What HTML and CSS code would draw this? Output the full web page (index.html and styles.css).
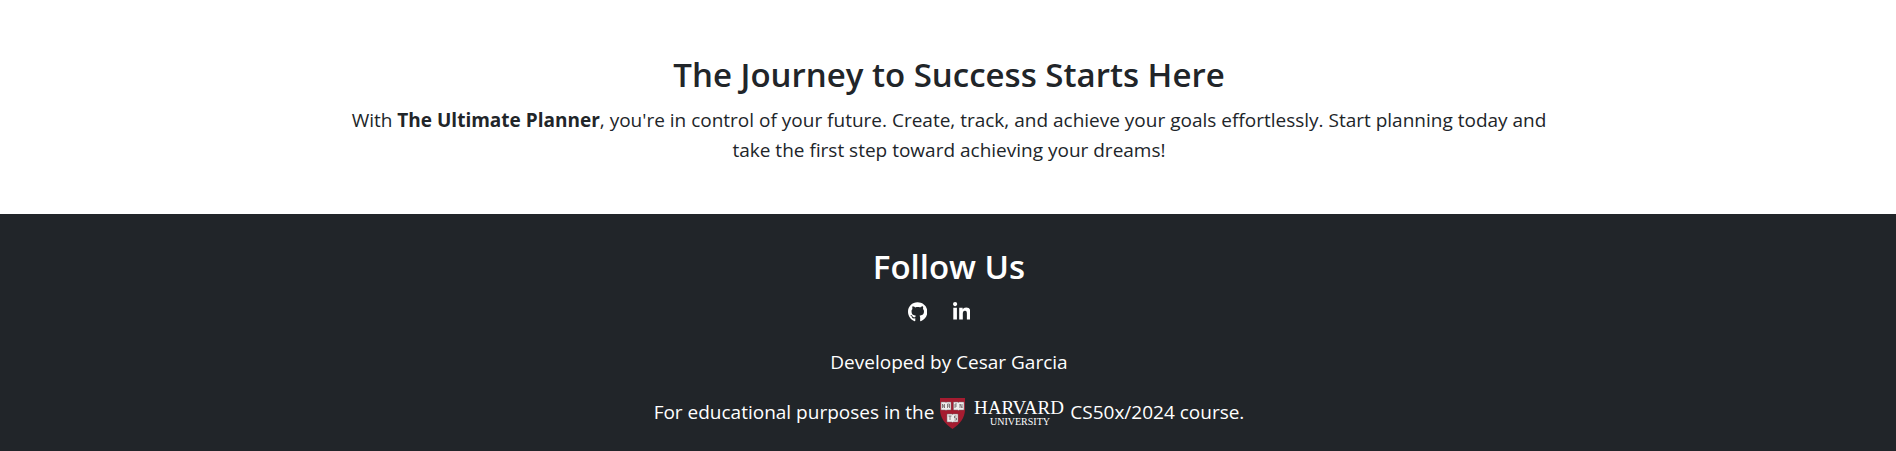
FILE: index.html
```html
<!DOCTYPE html>
<html lang="en">
<head>
<meta charset="utf-8">
<title>The Ultimate Planner</title>
<link rel="stylesheet" href="styles.css">
</head>
<body>
<main class="intro">
  <h2 class="title">The Journey to Success Starts Here</h2>
  <p class="lead">With <strong>The Ultimate Planner</strong>, you're in control of your future. Create, track, and achieve your goals effortlessly. Start planning today and take the first step toward achieving your dreams!</p>
</main>
<footer class="footer">
  <h2 class="title">Follow Us</h2>
  <nav class="social">
    <a href="#github" aria-label="GitHub"><svg class="icon" viewBox="0 0 496 512" fill="currentColor"><path d="M165.900 397.400c0 2-2.300 3.600-5.200 3.600-3.300.3-5.600-1.300-5.600-3.600 0-2 2.300-3.600 5.200-3.600 3-.3 5.600 1.300 5.600 3.600zM244.800 8C106.100 8 0 113.300 0 252c0 110.900 69.800 205.800 169.500 239.200 12.800 2.300 17.300-5.600 17.300-12.100 0-6.200-.3-40.400-.3-61.400 0 0-70 15-84.700-29.800 0 0-11.400-29.100-27.800-36.600 0 0-22.900-15.700 1.600-15.400 0 0 24.900 2 38.600 25.800 21.900 38.600 58.600 27.500 72.900 20.900 2.300-16 8.800-27.100 16-33.700-55.900-6.200-112.300-14.300-112.300-110.500 0-27.500 7.600-41.300 23.600-58.900-2.600-6.500-11.100-33.300 2.600-67.900 20.900-6.500 69 27 69 27 20-5.600 41.500-8.500 62.800-8.500s42.800 2.900 62.800 8.500c0 0 48.100-33.600 69-27 13.700 34.700 5.200 61.400 2.600 67.900 16 17.700 25.800 31.500 25.800 58.900 0 96.500-58.900 104.200-114.800 110.500 9.200 7.900 17 22.900 17 46.400 0 33.700-.3 75.400-.3 83.600 0 6.500 4.600 14.400 17.300 12.100C428.200 457.800 496 362.900 496 252 496 113.300 383.500 8 244.800 8z"/></svg></a>
    <a href="#linkedin" aria-label="LinkedIn"><svg class="icon" viewBox="0 0 448 512" fill="currentColor"><path d="M100.300 448H7.400V148.900h92.900zM53.800 108.100C24.100 108.100 0 83.500 0 53.800a53.800 53.800 0 0 1 107.600 0c0 29.700-24.100 54.300-53.800 54.300zM447.900 448h-92.700V302.400c0-34.700-.7-79.200-48.300-79.200-48.300 0-55.700 37.700-55.700 76.700V448h-92.800V148.900h89.100v40.800h1.300c12.400-23.500 42.700-48.300 87.900-48.300 94 0 111.300 61.900 111.300 142.300V448z"/></svg></a>
  </nav>
  <p class="note">Developed by Cesar Garcia</p>
  <p class="note">For educational purposes in the
    <svg class="harvard" viewBox="0 0 126 32" role="img" aria-label="Harvard University">
      <path fill="#a51c30" d="M1 0h25v11c0 9-5 15-12.500 20C6 26 1 20 1 11z"/>
      <g fill="#f0eded" stroke="#776b6e" stroke-width=".5">
        <path d="M2 4h4.500l.5.600.5-.6H12v8H7.500l-.5.600-.5-.6H2zM14.500 4H19l.5.600.5-.6h5v8H20l-.5.600-.5-.6h-4.500zM8 16h5l.5.600.5-.6h5v8h-5l-.5.600-.5-.6H8z"/>
      </g>
      <path fill="none" stroke="#6b5f62" stroke-width=".8" d="M3.500 10V6l2 4V6M8.500 10V6h2v4M8.500 8h2M16 10V6h2M16 8h2M21 10V6l2 4V6M9.500 18h3M11 18v4M17.500 18h-2v2h2v2h-2"/>
      <text class="wordmark" x="35" y="16" font-size="19">HARVARD</text>
      <text class="wordmark" x="51" y="27" font-size="10">UNIVERSITY</text>
    </svg>
    CS50x/2024 course.</p>
</footer>
</body>
</html>
```
FILE: styles.css
```css
body {
  margin: 0;
  background: #fff;
  color: #212529;
  font-family: "Segoe UI", "Open Sans", "Noto Sans", sans-serif;
  font-size: 19px;
  line-height: 30px;
  text-align: center;
}
.intro {
  max-width: 1200px;
  margin: 0 auto;
  padding: 53px 46px 49px 48px;
}
.title {
  margin: 0 0 9px;
  font-size: 33px;
  font-weight: 600;
  line-height: 43px;
}
.lead {
  margin: 0;
}
.lead strong { font-weight: 700; }
.footer {
  padding: 31px 16px 24px 18px;
  background: #212529;
  color: #fff;
}
.footer .title { margin-bottom: 4px; }
.social {
  display: flex;
  justify-content: center;
  gap: 26px;
  padding: 10px 20px 10px 0;
}
.social a { display: flex; color: #fff; }
.icon { height: 20px; }
.note { margin: 0; padding: 15px 0 5px; }
.harvard {
  width: 126px;
  height: 32px;
  margin: -4px 0;
  overflow: visible;
  vertical-align: middle;
}
.wordmark { fill: #fff; font-family: "Liberation Serif", serif; }
```
